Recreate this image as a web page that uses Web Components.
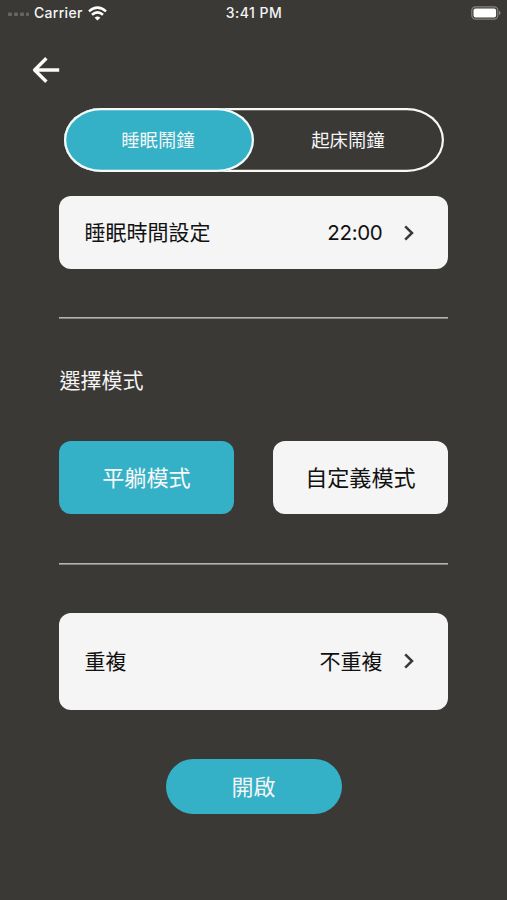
<!DOCTYPE html>
<html lang="zh-Hant">
<head>
<meta charset="utf-8">
<title>睡眠鬧鐘</title>
<style>
html, body { margin: 0; height: 100%; background: #3b3935; }
body { font-family: Inter, "Noto Sans CJK TC", sans-serif; color: #f5f5f5; overflow: hidden; }
</style>
</head>
<body>
<alarm-screen></alarm-screen>
<script>
function define(name, html) {
  const template = document.createElement('template');
  template.innerHTML = html;
  customElements.define(name, class extends HTMLElement {
    constructor() {
      super();
      this.attachShadow({ mode: 'open' }).append(template.content.cloneNode(true));
    }
  });
}

define('status-bar', `
<style>
:host { display: grid; grid-template-columns: 1fr auto 1fr; align-items: center; height: 26px; padding: 0 6px 0 8px; box-sizing: border-box; font-size: 14px; font-weight: 500; line-height: 26px; }
.left { display: flex; align-items: center; }
.carrier { margin-left: 5px; letter-spacing: .3px; }
.clock { letter-spacing: .5px; margin-right: 1px; }
.wifi { margin-left: 5px; }
.battery { justify-self: end; }
svg { display: block; }
</style>
<div class="left">
  <svg width="21" height="6" viewBox="0 0 21 6" fill="#686660"><rect x="0" y="2.5" width="4" height="3.5" rx="1"/><rect x="6" y="2.5" width="4" height="3.5" rx="1"/><rect x="12" y="2.5" width="4" height="3.5" rx="1"/><rect x="18" y="2.5" width="3" height="3.5" rx="1"/></svg>
  <span class="carrier">Carrier</span>
  <svg class="wifi" width="19" height="15" viewBox="0 0 19 15" fill="none" stroke="#fff" stroke-width="2.5"><path d="M1 5.4Q9.5-2.2 18 5.4"/><path d="M4 8.8Q9.5 4 15 8.8"/><path d="M9.5 14.6L6.6 11.7Q9.5 9.3 12.4 11.7Z" fill="#fff" stroke="none"/></svg>
</div>
<span class="clock">3:41 PM</span>
<svg class="battery" width="30" height="14" viewBox="0 0 30 14"><rect x=".8" y=".8" width="26" height="12.4" rx="3.6" fill="none" stroke="#85847f" stroke-width="1.2"/><rect x="2.5" y="2.5" width="22.6" height="9" rx="2" fill="#fff"/><path d="M28 4.8Q29.6 5.5 29.6 7T28 9.2Z" fill="#85847f"/></svg>`);

define('back-button', `
<style>:host { display: block; width: 28px; height: 28px; } svg { display: block; }</style>
<svg width="28" height="28" viewBox="0 0 28 28" fill="none" stroke="#fafaf8" stroke-width="3.4" stroke-linejoin="round"><path d="M27.2 14H3M14.4 2.3L2.6 14L14.4 25.7"/></svg>`);

define('segment-control', `
<style>
:host { display: grid; grid-template-columns: 1fr 1fr; width: 380px; height: 64px; box-sizing: border-box; border-radius: 37px / 32px; box-shadow: inset 0 0 0 2.2px #f8f8f4; }
</style>
<slot></slot>`);

define('segment-item', `
<style>
:host { display: flex; align-items: center; justify-content: center; padding: 1px 2px 0 0; box-sizing: border-box; font-size: 18.4px; line-height: 28px; border-radius: 37px / 32px; }
:host([active]) { background: #34b1c7; box-shadow: inset 0 0 0 2.2px #f8f8f4; }
</style>
<slot></slot>`);

define('setting-row', `
<style>
:host { display: flex; align-items: center; box-sizing: border-box; padding: 0 34.5px 0 25px; border-radius: 12px; background: #f5f5f5; color: #111; font-size: 21px; line-height: 32px; }
.label { flex: 1; padding-top: 1px; }
::slotted(span) { padding-top: 1px; }
svg { display: block; margin-left: 21.5px; }
</style>
<span class="label"><slot></slot></span>
<slot name="value"></slot>
<svg width="10" height="16" viewBox="0 0 10 16" fill="none" stroke="#383838" stroke-width="2.5"><path d="M1.2 1.3L8 8L1.2 14.7"/></svg>`);

define('section-divider', `
<style>:host { display: block; height: 2px; } svg { display: block; }</style>
<svg width="389" height="2"><rect width="389" height="1" fill="#b5b4af"/><rect y="1" width="389" height="1" fill="#85847f"/></svg>`);

define('mode-button', `
<style>
:host { display: flex; align-items: center; justify-content: center; height: 73px; box-sizing: border-box; padding: 1px 1px 0 0; border-radius: 12px; background: #f5f5f5; color: #111; font-size: 22.1px; line-height: 32px; }
:host([active]) { background: #34b1c7; color: #f8f8f8; }
</style>
<slot></slot>`);

define('action-button', `
<style>
:host { display: flex; align-items: center; justify-content: center; width: 176px; height: 55px; box-sizing: border-box; padding: 1px 1px 0 0; border-radius: 27.5px; background: #34b1c7; font-size: 22px; line-height: 32px; }
</style>
<slot></slot>`);

define('alarm-screen', `
<style>
:host { display: block; width: 507px; height: 900px; }
back-button { margin: 30px 0 0 32px; }
main { display: flex; flex-direction: column; width: 389px; margin: 23.5px auto 0 59.4px; }
segment-control { margin-left: 4.6px; }
.time { height: 73px; margin-top: 24.5px; }
.time span { font-size: 20.5px; letter-spacing: -.35px; }
.d1 { margin-top: 48px; }
.label { font-size: 21px; line-height: 32px; margin-top: 46px; }
.modes { display: grid; grid-template-columns: 175px 175px; gap: 39px; margin-top: 44.4px; }
.d2 { margin-top: 48.6px; }
.repeat { height: 97px; margin-top: 48px; }
action-button { align-self: center; margin-top: 49px; }
</style>
<status-bar></status-bar>
<back-button></back-button>
<main>
  <segment-control><segment-item active>睡眠鬧鐘</segment-item><segment-item>起床鬧鐘</segment-item></segment-control>
  <setting-row class="time">睡眠時間設定<span slot="value">22:00</span></setting-row>
  <section-divider class="d1"></section-divider>
  <div class="label">選擇模式</div>
  <div class="modes"><mode-button active>平躺模式</mode-button><mode-button>自定義模式</mode-button></div>
  <section-divider class="d2"></section-divider>
  <setting-row class="repeat">重複<span slot="value">不重複</span></setting-row>
  <action-button>開啟</action-button>
</main>`);
</script>
</body>
</html>
